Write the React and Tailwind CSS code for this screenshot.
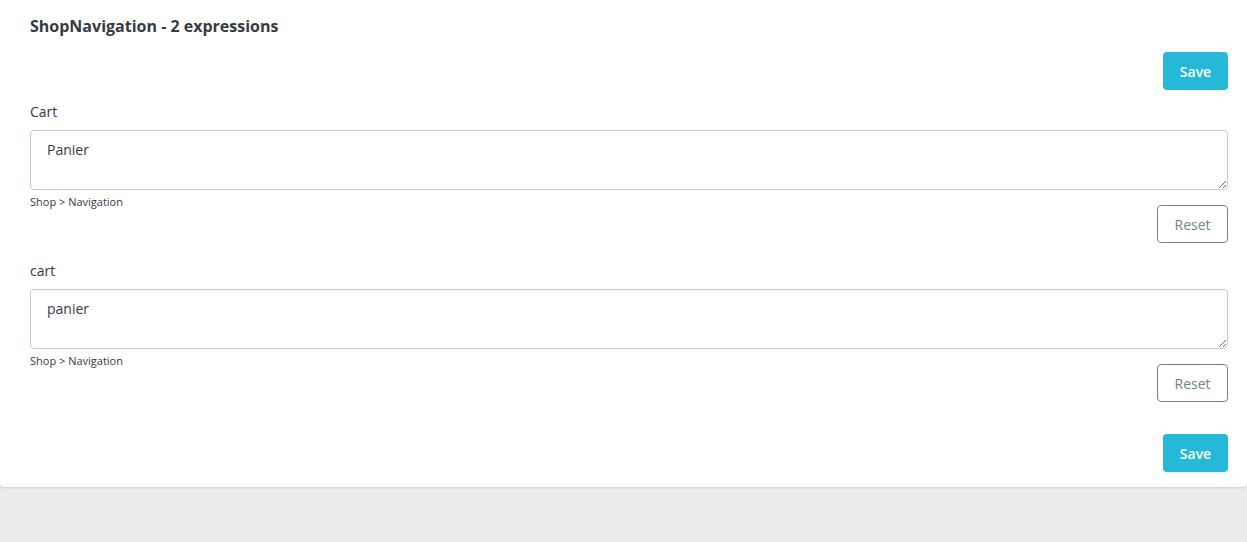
export default function App() {
  const font = { fontFamily: '"Open Sans", "Noto Sans", sans-serif' };
  const Field = ({ label, value, first }) => (
    <div className={first ? "mt-[12px]" : "mt-[18px]"}>
      <div className="text-[14px] leading-[20px] text-[#363a41] mb-[8px]">{label}</div>
      <textarea
        defaultValue={value}
        className="block w-full h-[60px] border border-[#bbcdd2] rounded-[4px] px-[16px] py-[9px] text-[14px] leading-[20px] text-[#363a41] outline-none"
        style={font}
      />
      <div className="mt-[5px] text-[11px] leading-[14px] text-[#363a41]">Shop &gt; Navigation</div>
      <div className="flex justify-end mt-[-4px]">
        <button className="w-[71px] h-[38px] border border-[#6c868e] rounded-[4px] text-[14px] text-[#6c868e] bg-white" style={font}>Reset</button>
      </div>
    </div>
  );
  return (
    <div className="w-[1247px] h-[542px] bg-[#eaebed] overflow-hidden" style={font}>
      <div className="bg-white rounded-b-[4px] shadow-[0_1px_2px_rgba(0,0,0,0.12)] pl-[30px] pr-[19px] pt-[15px] pb-[15px]">
        <div className="text-[16px] leading-[22px] font-bold text-[#363a41]">ShopNavigation - 2 expressions</div>
        <div className="flex justify-end mt-[15px]">
          <button className="w-[65px] h-[38px] rounded-[4px] bg-[#25b9d7] text-white text-[14px] font-semibold" style={font}>Save</button>
        </div>
        <Field label="Cart" value="Panier" first />
        <Field label="cart" value="panier" />
        <div className="flex justify-end mt-[32px]">
          <button className="w-[65px] h-[38px] rounded-[4px] bg-[#25b9d7] text-white text-[14px] font-semibold" style={font}>Save</button>
        </div>
      </div>
    </div>
  );
}
